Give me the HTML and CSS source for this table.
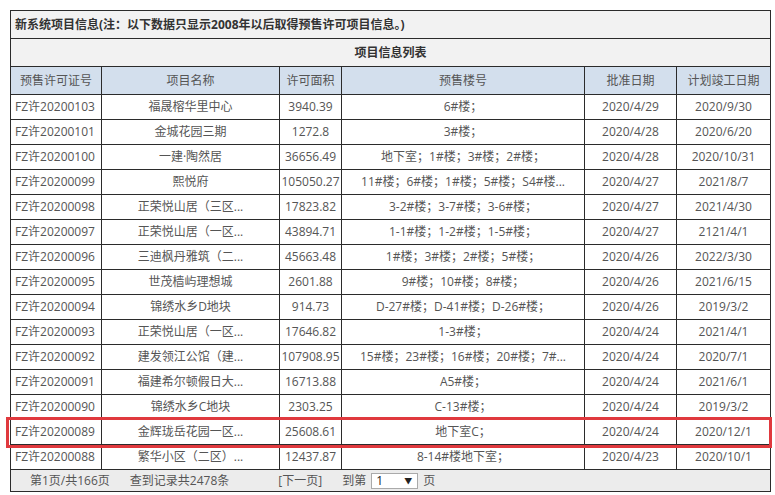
FILE: index.html
```html
<!DOCTYPE html>
<html lang="zh-CN">
<head>
<meta charset="utf-8">
<link rel="stylesheet" href="styles.css">
</head>
<body>
<div class="wrap">
<table class="grid">
<colgroup>
<col class="c1"><col class="c2"><col class="c3"><col class="c4"><col class="c5"><col class="c6">
</colgroup>
<tr class="title"><td colspan="6">新系统项目信息(注：以下数据只显示2008年以后取得预售许可项目信息。)</td></tr>
<tr class="subtitle"><td colspan="6">项目信息列表</td></tr>
<tr class="head"><td>预售许可证号</td><td>项目名称</td><td>许可面积</td><td>预售楼号</td><td>批准日期</td><td>计划竣工日期</td></tr>
<tr><td class="l">FZ许20200103</td><td>福晟榕华里中心</td><td>3940.39</td><td>6#楼；</td><td>2020/4/29</td><td>2020/9/30</td></tr>
<tr><td class="l">FZ许20200101</td><td>金城花园三期</td><td>1272.8</td><td>3#楼；</td><td>2020/4/28</td><td>2020/6/20</td></tr>
<tr><td class="l">FZ许20200100</td><td>一建·陶然居</td><td>36656.49</td><td>地下室；1#楼；3#楼；2#楼；</td><td>2020/4/28</td><td>2020/10/31</td></tr>
<tr><td class="l">FZ许20200099</td><td>熙悦府</td><td>105050.27</td><td>11#楼；6#楼；1#楼；5#楼；S4#楼...</td><td>2020/4/27</td><td>2021/8/7</td></tr>
<tr><td class="l">FZ许20200098</td><td>正荣悦山居（三区...</td><td>17823.82</td><td>3-2#楼；3-7#楼；3-6#楼；</td><td>2020/4/27</td><td>2021/4/30</td></tr>
<tr><td class="l">FZ许20200097</td><td>正荣悦山居（一区...</td><td>43894.71</td><td>1-1#楼；1-2#楼；1-5#楼；</td><td>2020/4/27</td><td>2121/4/1</td></tr>
<tr><td class="l">FZ许20200096</td><td>三迪枫丹雅筑（二...</td><td>45663.48</td><td>1#楼；3#楼；2#楼；5#楼；</td><td>2020/4/26</td><td>2022/3/30</td></tr>
<tr><td class="l">FZ许20200095</td><td>世茂樯屿理想城</td><td>2601.88</td><td>9#楼；10#楼；8#楼；</td><td>2020/4/26</td><td>2021/6/15</td></tr>
<tr><td class="l">FZ许20200094</td><td>锦绣水乡D地块</td><td>914.73</td><td>D-27#楼；D-41#楼；D-26#楼；</td><td>2020/4/26</td><td>2019/3/2</td></tr>
<tr><td class="l">FZ许20200093</td><td>正荣悦山居（一区...</td><td>17646.82</td><td>1-3#楼；</td><td>2020/4/24</td><td>2021/4/1</td></tr>
<tr><td class="l">FZ许20200092</td><td>建发领江公馆（建...</td><td>107908.95</td><td>15#楼；23#楼；16#楼；20#楼；7#...</td><td>2020/4/24</td><td>2020/7/1</td></tr>
<tr><td class="l">FZ许20200091</td><td>福建希尔顿假日大...</td><td>16713.88</td><td>A5#楼；</td><td>2020/4/24</td><td>2021/6/1</td></tr>
<tr><td class="l">FZ许20200090</td><td>锦绣水乡C地块</td><td>2303.25</td><td>C-13#楼；</td><td>2020/4/24</td><td>2019/3/2</td></tr>
<tr><td class="l">FZ许20200089</td><td>金辉珑岳花园一区...</td><td>25608.61</td><td>地下室C；</td><td>2020/4/24</td><td>2020/12/1</td></tr>
<tr><td class="l">FZ许20200088</td><td>繁华小区（二区）...</td><td>12437.87</td><td>8-14#楼地下室；</td><td>2020/4/23</td><td>2020/10/1</td></tr>
<tr class="foot"><td colspan="6">
<div class="pager">
<span class="p1">第1页/共166页</span>
<span class="p2">查到记录共2478条</span>
<span class="p3">[下一页]</span>
<span class="p4">到第</span>
<span class="sel"><span>1</span><span class="arr">▼</span></span>
<span class="p5">页</span>
</div>
</td></tr>
</table>
<div class="mark"></div>
</div>
</body>
</html>
```
FILE: styles.css
```css
html, body {
  margin: 0;
  padding: 0;
  background: #fff;
}
body {
  font-family: "Open Sans", "Noto Sans CJK SC", "Microsoft YaHei", sans-serif;
  font-size: 12px;
  color: #555;
}
.wrap {
  position: relative;
  padding: 10px 0 0 10px;
}
.grid {
  border-collapse: collapse;
  table-layout: fixed;
  width: 760px;
}
.c1 { width: 91px; }
.c2 { width: 178px; }
.c3 { width: 62px; }
.c4 { width: 243px; }
.c5 { width: 92px; }
.c6 { width: 94px; }
.grid td {
  border: 1px solid #2b2b2b;
  height: 24px;
  padding: 0;
  text-align: center;
  white-space: nowrap;
  overflow: hidden;
  line-height: 24px;
}
.grid td.l {
  text-align: left;
  padding-left: 4px;
}
.title td {
  height: 27px;
  line-height: 27px;
  background: #f2f2f2;
  text-align: left;
  padding-left: 4px;
  font-weight: bold;
  color: #333;
}
.subtitle td {
  height: 27px;
  line-height: 27px;
  background: #f2f2f2;
  font-weight: bold;
  color: #333;
}
.head td {
  height: 27px;
  line-height: 27px;
  background: #d3dfed;
  color: #555;
}
.foot td {
  height: 21px;
  line-height: 21px;
  background: #ececec;
  text-align: left;
}
.pager {
  display: flex;
  align-items: center;
  height: 21px;
}
.p1 { margin-left: 19px; }
.p2 { margin-left: 20px; }
.p3 { margin-left: 49px; }
.p4 { margin-left: 20px; }
.sel {
  margin-left: 5px;
  width: 47px;
  height: 16px;
  background: #fff;
  border: 1px solid #aaa;
  display: flex;
  align-items: center;
  justify-content: space-between;
  padding: 0 5px 0 4px;
  box-sizing: border-box;
  color: #222;
  line-height: 15px;
}
.sel .arr {
  font-size: 8px;
  color: #222;
}
.p5 { margin-left: 5px; }
.mark {
  position: absolute;
  left: 6px;
  top: 417px;
  width: 760px;
  height: 25px;
  border: 3px solid #e0393e;
}
```
